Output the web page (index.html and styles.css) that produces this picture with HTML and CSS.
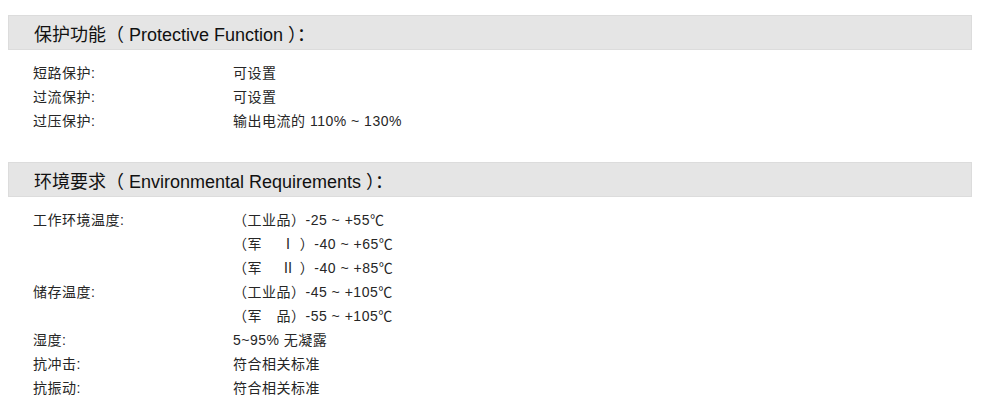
FILE: index.html
```html
<!DOCTYPE html>
<html lang="zh-CN">
<head>
<meta charset="utf-8">
<title>保护功能</title>
<link rel="stylesheet" href="styles.css">
</head>
<body>
<div class="page">
  <section class="section">
    <h2 class="section-title">保护功能（ Protective Function ）：</h2>
    <div class="specs">
      <div class="row"><span class="label">短路保护:</span><span class="value">可设置</span></div>
      <div class="row"><span class="label">过流保护:</span><span class="value">可设置</span></div>
      <div class="row"><span class="label">过压保护:</span><span class="value">输出电流的 110% ~ 130%</span></div>
    </div>
  </section>
  <section class="section section-second">
    <h2 class="section-title">环境要求（ Environmental Requirements ）：</h2>
    <div class="specs">
      <div class="row"><span class="label">工作环境温度:</span><span class="value">（工业品）-25 ~ +55℃</span></div>
      <div class="row"><span class="label"></span><span class="value">（军&emsp;&nbsp;Ⅰ ）-40 ~ +65℃</span></div>
      <div class="row"><span class="label"></span><span class="value">（军&emsp;&nbsp;Ⅱ ）-40 ~ +85℃</span></div>
      <div class="row"><span class="label">储存温度:</span><span class="value">（工业品）-45 ~ +105℃</span></div>
      <div class="row"><span class="label"></span><span class="value">（军&emsp;品）-55 ~ +105℃</span></div>
      <div class="row"><span class="label">湿度:</span><span class="value">5~95% 无凝露</span></div>
      <div class="row"><span class="label">抗冲击:</span><span class="value">符合相关标准</span></div>
      <div class="row"><span class="label">抗振动:</span><span class="value">符合相关标准</span></div>
    </div>
  </section>
</div>
</body>
</html>
```
FILE: styles.css
```css
html, body {
  margin: 0;
  padding: 0;
  background: #ffffff;
}
body {
  font-family: "Liberation Sans", "Noto Sans CJK SC", sans-serif;
  color: #262626;
}
.page {
  padding: 15px 12px 0 8px;
}
.section-second {
  margin-top: 29px;
}
.section-title {
  box-sizing: border-box;
  width: 964px;
  height: 35px;
  margin: 0;
  padding-left: 25px;
  display: flex;
  align-items: center;
  background: #e5e5e5;
  border: 1px solid #dcdcdc;
  font-size: 18px;
  font-weight: normal;
  color: #111111;
}
.specs {
  padding-top: 11px;
  padding-left: 25px;
}
.row {
  display: flex;
  height: 24px;
  line-height: 24px;
  font-size: 14px;
  letter-spacing: 0.5px;
}
.label {
  width: 200px;
  flex: none;
}
.value {
  white-space: pre;
}
```
